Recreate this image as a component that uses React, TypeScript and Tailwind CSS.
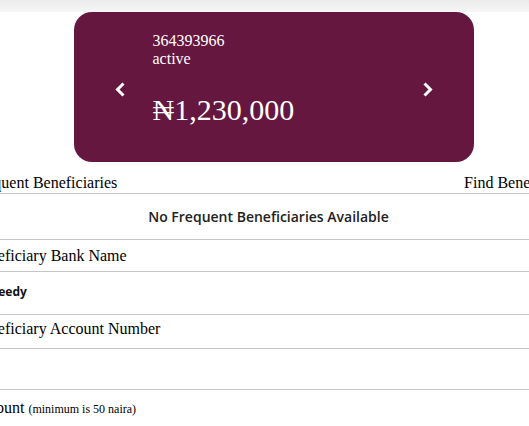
export default function App() {
  return (
    <div className="w-full h-[426px] overflow-hidden bg-white font-['Liberation_Serif',serif] text-black">
      <div className="h-[12px] bg-gradient-to-b from-[#ebebeb] to-[#f6f6f6]" />

      <div className="-ml-[28px] w-[603px]">
        {/* account card */}
        <div className="mx-auto w-[400px] h-[150px] rounded-[18px] bg-[#661740] text-white flex items-center px-[41px]">
          <svg viewBox="0 0 10 15" className="w-[10px] h-[15px] mt-[5px] shrink-0">
            <polyline points="8.5,1.5 2.5,7.5 8.5,13.5" fill="none" stroke="white" strokeWidth="3" />
          </svg>
          <div className="flex-1 ml-[28px] self-start pt-[20px]">
            <div className="text-[16px] leading-[18px]">364393966</div>
            <div className="text-[16px] leading-[18px]">active</div>
            <div className="mt-[25px] text-[30px] leading-[34px]">₦1,230,000</div>
          </div>
          <svg viewBox="0 0 10 15" className="w-[10px] h-[15px] mt-[5px] shrink-0">
            <polyline points="1.5,1.5 7.5,7.5 1.5,13.5" fill="none" stroke="white" strokeWidth="3" />
          </svg>
        </div>

        {/* frequent beneficiaries */}
        <div className="flex justify-between pt-[12px] pb-[1px] pr-[3px] text-[16px] leading-[18px] border-b border-[#c6c6c6]">
          <span>Frequent Beneficiaries</span>
          <span>Find Beneficiary</span>
        </div>
        <div className="h-[46px] flex items-center justify-center pr-[10px] border-b border-[#c6c6c6] font-['Open_Sans',sans-serif] font-semibold text-[14px] leading-[20px] text-[#222]">
          No Frequent Beneficiaries Available
        </div>

        {/* bank */}
        <div className="h-[32px] pt-[7px] text-[16px] leading-[18px] border-b border-[#c6c6c6]">
          Beneficiary Bank Name
        </div>
        <div className="h-[43px] pt-[12px] pl-[12px] font-['Open_Sans',sans-serif] font-bold text-[12px] leading-[16px] text-[#111] border-b border-[#c6c6c6]">
          Speedy
        </div>

        {/* account number */}
        <div className="h-[34px] pt-[5px] text-[16px] leading-[18px] border-b border-[#c6c6c6]">
          Beneficiary Account Number
        </div>
        <div className="h-[41px] border-b border-[#c6c6c6]" />

        {/* amount */}
        <div className="pt-[9px] text-[16px] leading-[18px]">
          Amount <span className="text-[12px]">(minimum is 50 naira)</span>
        </div>
      </div>
    </div>
  );
}
